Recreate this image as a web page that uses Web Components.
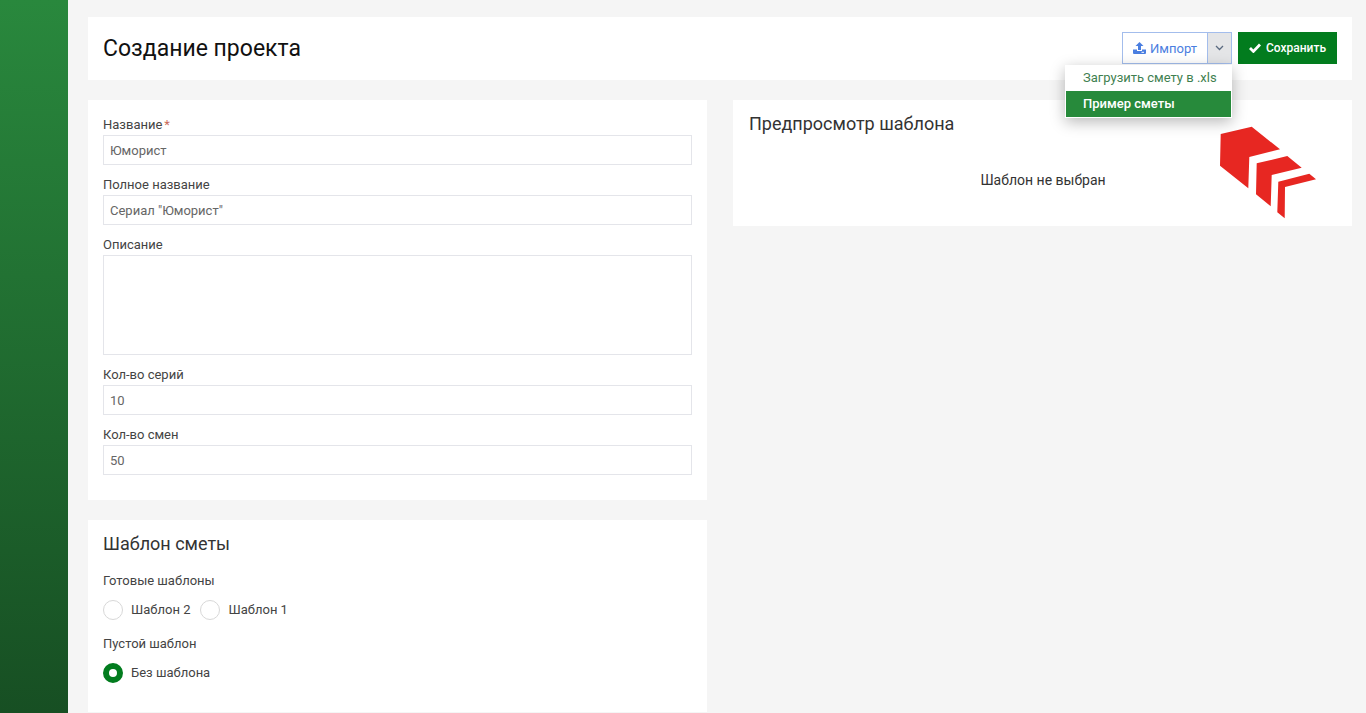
<!DOCTYPE html>
<html lang="ru">
<head>
<meta charset="utf-8">
<title>Создание проекта</title>
<style>
html, body { margin: 0; height: 713px; overflow: hidden; background: #f5f5f5; }
body { font: 13px Roboto, "Noto Sans", sans-serif; color: #333; }
</style>
</head>
<body>
<project-page></project-page>

<script>
class AppCard extends HTMLElement {
    connectedCallback() {
        const shadow = this.attachShadow({mode: 'open'});
        shadow.innerHTML = `<style>
            :host { display: block; background: #fff; padding: 15px; box-sizing: border-box; }
        </style><slot></slot>`;
    }
}

class FormField extends HTMLElement {
    connectedCallback() {
        const shadow = this.attachShadow({mode: 'open'});
        const star = this.hasAttribute('required') ? '<span class="star">*</span>' : '';
        const h = this.getAttribute('height') || 30;
        shadow.innerHTML = `<style>
            :host { display: block; margin-bottom: 10px; }
            .label { height: 20px; line-height: 20px; font-size: 13px; color: #444; }
            .star { color: #c96a5a; margin-left: 2px; }
            .box { height: ${h}px; box-sizing: border-box; border: 1px solid #e4e5ea; padding: 0 6px; line-height: 30px; color: #666; }
        </style>
        <div class="label">${this.getAttribute('label')}${star}</div>
        <div class="box"><slot></slot></div>`;
    }
}

class RadioItem extends HTMLElement {
    connectedCallback() {
        const shadow = this.attachShadow({mode: 'open'});
        shadow.innerHTML = `<style>
            :host { display: inline-flex; align-items: center; gap: 8px; height: 20px; color: #444; }
            i { width: 20px; height: 20px; box-sizing: border-box; border: 1px solid #d8d8d8; border-radius: 50%; }
            :host([checked]) i { border: 6px solid #027c1e; }
            span { padding-bottom: 2px; }
        </style><i></i><span><slot></slot></span>`;
    }
}

class SplitButton extends HTMLElement {
    connectedCallback() {
        const shadow = this.attachShadow({mode: 'open'});
        shadow.innerHTML = `<style>
            :host { display: block; position: relative; }
            .btn { display: flex; height: 32px; box-sizing: border-box; border: 1px solid #a3bdec; color: #4a7ee0; }
            .main { width: 84px; box-sizing: border-box; display: flex; align-items: center; justify-content: center; gap: 4px; background: #fff; }
            .caret { width: 23px; border-left: 1px solid #a3bdec; background: #e4e5e7; display: flex; align-items: center; justify-content: center; }
            .menu { position: absolute; top: 33px; right: 0; width: 167px; box-sizing: border-box; background: #fff; padding: 1px; box-shadow: 0 4px 14px rgba(0,0,0,.28); }
            .item { height: 25px; line-height: 24px; padding-left: 17px; color: #3f7f50; }
            .item.on { height: 26px; line-height: 26px; background: #278a3b; color: #fff; font-weight: 500; }
        </style>
        <div class="btn">
            <div class="main">
                <svg width="13" height="12" viewBox="0 0 13 12"><path fill="#4a7ee0" d="M6.500 0l4 4H8v4H5V4H2.500zM0 7.500h4V9h5V7.500h4V11a1 1 0 0 1-1 1H1a1 1 0 0 1-1-1z"/><path stroke="#fff" d="M8.500 10.300h2.500"/></svg>
                Импорт
            </div>
            <div class="caret"><svg width="9" height="6" viewBox="0 0 9 6"><path fill="none" stroke="#5a6a80" stroke-width="1.300" d="M1 1l3.500 3.500L8 1"/></svg></div>
        </div>
        <div class="menu">
            <div class="item">Загрузить смету в .xls</div>
            <div class="item on">Пример сметы</div>
        </div>`;
    }
}

class SaveButton extends HTMLElement {
    connectedCallback() {
        const shadow = this.attachShadow({mode: 'open'});
        shadow.innerHTML = `<style>
            :host { display: flex; align-items: center; justify-content: center; gap: 5px; width: 99px; height: 32px; background: #027c1e; color: #fff; font-size: 12px; font-weight: 500; }
        </style>
        <svg width="12" height="10" viewBox="0 0 12 10"><path fill="none" stroke="#fff" stroke-width="2.800" d="M1 5l3.400 3.400L11 1.600"/></svg>
        <slot></slot>`;
    }
}

class CompanyLogo extends HTMLElement {
    connectedCallback() {
        const shadow = this.attachShadow({mode: 'open'});
        shadow.innerHTML = `<style>
            :host { position: absolute; right: 35px; top: 26px; width: 98px; height: 93px; }
            svg { display: block; }
        </style>
        <svg width="98" height="93" viewBox="1219 126 98 93"><g fill="#e72722">
            <path d="M1220.7 134L1251.7 126.7 1280 149.3 1249.3 157 1248.3 188.3 1220 165.7z"/>
            <path d="M1256.7 163.3L1287.3 156 1301.7 167.7 1271.7 175 1270.7 206.3 1256 194.3z"/>
            <path d="M1278.3 181.7L1309.3 173.7 1316 179.3 1285 187 1284.7 218.3 1277.3 212.3z"/>
        </g></svg>`;
    }
}

class ProjectPage extends HTMLElement {
    connectedCallback() {
        const shadow = this.attachShadow({mode: 'open'});
        shadow.innerHTML = `<style>
            :host { display: flex; height: 713px; }
            .side { width: 68px; flex: none; background: linear-gradient(#29883d, #174f23); }
            .main { flex: 1; padding: 17px 14px 0 20px; min-width: 0; }
            .head { position: relative; z-index: 1; display: flex; align-items: flex-start; justify-content: space-between; height: 63px; box-sizing: border-box; background: #fff; padding: 15px 15px 0; margin-bottom: 20px; }
            h1 { margin: 0; font-size: 23px; line-height: 34px; font-weight: 400; color: #111; }
            .tools { display: flex; gap: 6px; }
            .cols { display: grid; grid-template-columns: 619px 619px; gap: 26px; align-items: start; }
            .left { display: flex; flex-direction: column; gap: 20px; }
            .form { height: 400px; }
            .tpl { height: 192px; padding-top: 14px; }
            h2 { font-size: 18px; font-weight: 400; color: #333; margin: 0; line-height: 20px; }
            .sub { line-height: 18px; color: #444; }
            .radios { display: flex; gap: 10px; }
            .preview { position: relative; height: 126px; padding-top: 14px; padding-left: 16px; }
            .empty { text-align: center; color: #333; font-size: 14px; margin-top: 38px; }
        </style>
        <div class="side"></div>
        <div class="main">
            <div class="head">
                <h1>Создание проекта</h1>
                <div class="tools">
                    <split-button></split-button>
                    <save-button>Сохранить</save-button>
                </div>
            </div>
            <div class="cols">
                <div class="left">
                    <app-card class="form">
                        <form-field label="Название" required>Юморист</form-field>
                        <form-field label="Полное название">Сериал "Юморист"</form-field>
                        <form-field label="Описание" height="100"></form-field>
                        <form-field label="Кол-во серий">10</form-field>
                        <form-field label="Кол-во смен">50</form-field>
                    </app-card>
                    <app-card class="tpl">
                        <h2>Шаблон сметы</h2>
                        <div class="sub" style="margin-top:18px">Готовые шаблоны</div>
                        <div class="radios" style="margin-top:10px">
                            <radio-item>Шаблон 2</radio-item>
                            <radio-item>Шаблон 1</radio-item>
                        </div>
                        <div class="sub" style="margin-top:15px">Пустой шаблон</div>
                        <div class="radios" style="margin-top:10px">
                            <radio-item checked>Без шаблона</radio-item>
                        </div>
                    </app-card>
                </div>
                <app-card class="preview">
                    <h2>Предпросмотр шаблона</h2>
                    <div class="empty">Шаблон не выбран</div>
                    <company-logo></company-logo>
                </app-card>
            </div>
        </div>`;
    }
}

customElements.define('app-card', AppCard);
customElements.define('form-field', FormField);
customElements.define('radio-item', RadioItem);
customElements.define('split-button', SplitButton);
customElements.define('save-button', SaveButton);
customElements.define('company-logo', CompanyLogo);
customElements.define('project-page', ProjectPage);
</script>
</body>
</html>
